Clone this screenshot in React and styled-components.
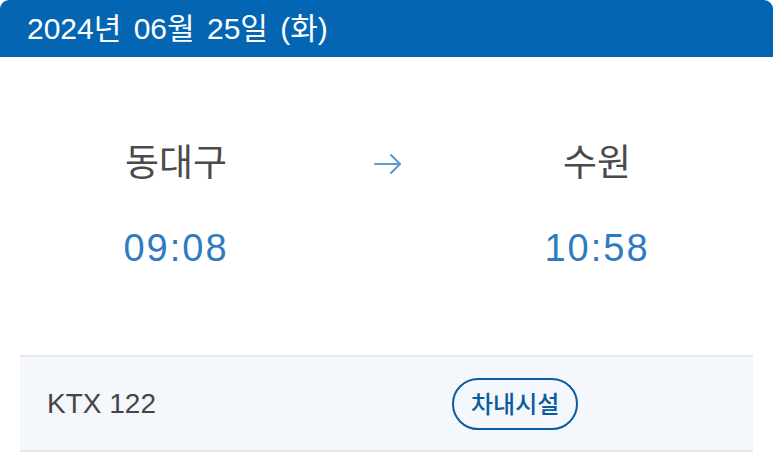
import React from 'react';
import styled, { createGlobalStyle } from 'styled-components';

const GlobalStyle = createGlobalStyle`
  html, body {
    margin: 0;
    padding: 0;
    background: #ffffff;
  }
  body {
    font-family: "Liberation Sans", "Noto Sans CJK KR", sans-serif;
  }
`;

const Card = styled.div`
  width: 773px;
  height: 452px;
  background: #ffffff;
  overflow: hidden;
`;

const DateBar = styled.div`
  height: 57px;
  line-height: 57px;
  padding-left: 27px;
  background: #0466b3;
  border-radius: 9px 9px 0 0;
  color: #ffffff;
  font-size: 30px;
  word-spacing: 4px;
`;

const Route = styled.div`
  display: grid;
  grid-template-columns: 1fr 69px 1fr;
  grid-template-rows: 40px 44px;
  row-gap: 42px;
  align-items: center;
  justify-items: center;
  padding: 87px 0 85px;
`;

const Station = styled.div`
  font-size: 37px;
  line-height: 40px;
  color: #4a4a4a;
`;

const Time = styled.div`
  font-size: 38px;
  line-height: 44px;
  letter-spacing: 2px;
  color: #2f7bc1;
`;

const Arrow = styled.svg`
  width: 28px;
  height: 22px;
  margin-left: 2px;
`;

const TrainRow = styled.div`
  display: flex;
  align-items: center;
  height: 93px;
  margin: 0 20px;
  padding-left: 27px;
  background: #f4f7fb;
  border-top: 2px solid #e5e7e9;
  border-bottom: 2px solid #e5e7e9;
`;

const TrainName = styled.div`
  width: 405px;
  font-size: 28px;
  color: #454545;
`;

const FacilityButton = styled.button`
  height: 52px;
  padding: 0 17px 2px;
  border: 2px solid #0b5c9e;
  border-radius: 26px;
  background: transparent;
  color: #0b5c9e;
  font-family: "Noto Sans CJK KR", sans-serif;
  font-size: 24px;
  font-weight: 500;
  cursor: pointer;
`;

const SPACER = <span />;

export default function App() {
  return (
    <>
      <GlobalStyle />
      <Card>
        <DateBar>2024년 06월 25일 (화)</DateBar>
        <Route>
          <Station>동대구</Station>
          <Arrow viewBox="0 0 28 22" fill="none" stroke="#5c9ad4" strokeWidth="2" strokeLinecap="round" strokeLinejoin="round">
            <path d="M1 11H26" />
            <path d="M17 2L26 11L17 20" />
          </Arrow>
          <Station>수원</Station>
          <Time>09:08</Time>
          {SPACER}
          <Time>10:58</Time>
        </Route>
        <TrainRow>
          <TrainName>KTX 122</TrainName>
          <FacilityButton>차내시설</FacilityButton>
        </TrainRow>
      </Card>
    </>
  );
}
